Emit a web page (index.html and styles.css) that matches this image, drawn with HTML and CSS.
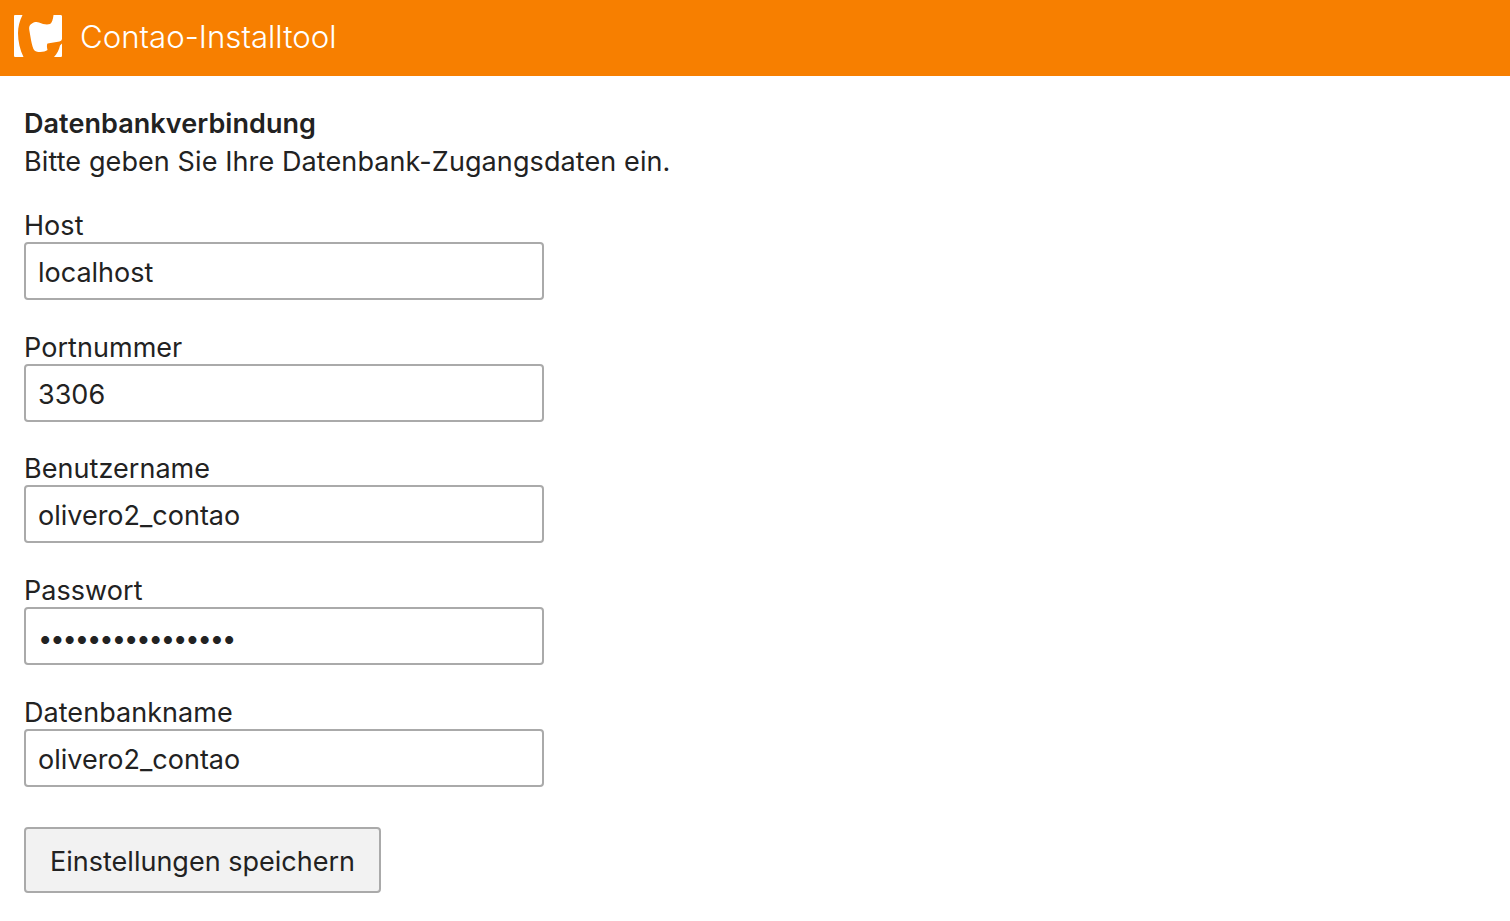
FILE: index.html
```html
<!DOCTYPE html>
<html lang="de">
<head>
<meta charset="utf-8">
<title>Contao-Installtool</title>
<link rel="stylesheet" href="styles.css">
</head>
<body>
<header class="topbar">
  <svg class="logo" width="50" height="48" viewBox="13 14 50 48" aria-hidden="true">
    <path fill="#fff" d="M15 15H22.500C19.500 21 18 27 18 33C18 41 20 50 23.500 57H15.500C14.500 57 14 56.500 14 55.500V16C14 15.500 14.500 15 15 15Z"/>
    <path fill="#fff" d="M53.500 15H60.500C61.500 15 62 15.500 62 16.500V38.500C62 40 61 41 59.500 41.500L47.500 43.500C46.500 45 47 48 47.500 50C45 52 38 53 34.500 50.500C33 49 32 45 31 40L29.300 30C28.800 26 30 24.500 32 23.500C34.500 21.700 37 21.600 39 22.500C43 24.300 47 25 50 24C52 23 53 19 53.500 15Z"/>
    <path fill="#fff" d="M60 45.500L62 43.500V55.500C62 56.500 61.500 57 60.500 57H54C57 54 59 50 60 45.500Z"/>
  </svg>
  <span class="brand">Contao-Installtool</span>
</header>
<main class="content">
  <h1 class="title">Datenbankverbindung</h1>
  <p class="intro">Bitte geben Sie Ihre Datenbank-Zugangsdaten ein.</p>
  <form class="form">
    <div class="field"><label class="label" for="host">Host</label><input class="input" id="host" type="text" value="localhost"></div>
    <div class="field"><label class="label" for="port">Portnummer</label><input class="input" id="port" type="text" value="3306"></div>
    <div class="field"><label class="label" for="user">Benutzername</label><input class="input" id="user" type="text" value="olivero2_contao"></div>
    <div class="field"><label class="label" for="pass">Passwort</label><input class="input input-secret" id="pass" type="password" value="aaaaaaaaaaaaaaaa"></div>
    <div class="field"><label class="label" for="db">Datenbankname</label><input class="input" id="db" type="text" value="olivero2_contao"></div>
    <button class="button" type="button">Einstellungen speichern</button>
  </form>
</main>
</body>
</html>
```
FILE: styles.css
```css
* { box-sizing: border-box; }
html, body { margin: 0; padding: 0; }
body {
  background: #fff;
  color: #222;
  font-family: Inter, "Liberation Sans", sans-serif;
  font-size: 27px;
  line-height: 38px;
}
.topbar {
  height: 76px;
  background: #f77f00;
  display: flex;
  align-items: center;
  padding-left: 13px;
  gap: 17px;
}
.logo { flex: none; }
.brand { color: #fff; font-size: 31.200px; font-weight: 300; margin-top: -3px; }
.content { padding: 29px 24px 0; }
.title { margin: 0; font-size: 27px; line-height: 38px; font-weight: 600; letter-spacing: 0.050px; }
.intro { margin: 0 0 24.900px; letter-spacing: 0.100px; }
.form { display: flex; flex-direction: column; align-items: flex-start; }
.field { display: flex; flex-direction: column; margin-bottom: 27.750px; }
.label { display: block; height: 36px; line-height: 30px; padding-top: 5px; letter-spacing: 0.050px; }
.input {
  width: 520px;
  height: 58px;
  border: 2px solid #aaa;
  border-radius: 4px;
  padding: 3px 12px 0;
  font: inherit;
  color: #222;
  background: #fff;
}
.input-secret { font-size: 25.500px; letter-spacing: -2.070px; padding-top: 3px; }
.button {
  width: 357px;
  height: 66px;
  margin-top: 12px;
  border: 2px solid #aaa;
  border-radius: 4px;
  background: #f2f2f2;
  font: inherit;
  color: #222;
  padding: 5px 0 0;
}
```
